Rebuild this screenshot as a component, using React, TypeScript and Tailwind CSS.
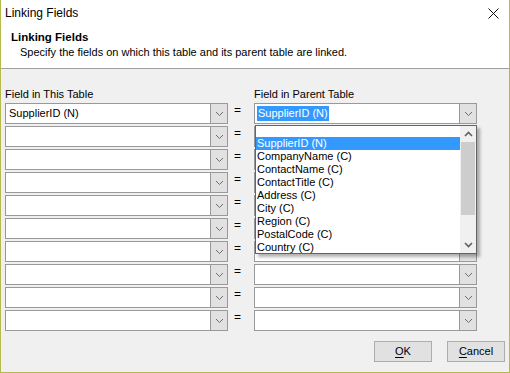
import React from 'react'

const FONT = { fontFamily: '"Liberation Sans", Arial, sans-serif' }

const PARENT_FIELDS = [
  'SupplierID (N)',
  'CompanyName (C)',
  'ContactName (C)',
  'ContactTitle (C)',
  'Address (C)',
  'City (C)',
  'Region (C)',
  'PostalCode (C)',
  'Country (C)',
]

function Chevron({ up = false, bold = false }: { up?: boolean; bold?: boolean }) {
  return (
    <svg width="9" height="6" viewBox="0 0 9 6" className="block">
      <path
        d={up ? 'M1 5 L4.5 1.5 L8 5' : 'M1 1 L4.5 4.5 L8 1'}
        fill="none"
        stroke={bold ? '#606060' : '#6d6d6d'}
        strokeWidth={bold ? 1.6 : 1}
      />
    </svg>
  )
}

function Combo({ value, selected }: { value?: string; selected?: boolean }) {
  return (
    <div className="flex h-[21px] w-[223px] border border-[#999999] bg-white">
      <div className="flex flex-1 items-center pl-[2px] text-[11px] leading-[15px]">
        {value && (
          <span className={selected ? 'bg-[#3399ff] px-[1px] text-white' : 'px-[1px] text-black'}>{value}</span>
        )}
      </div>
      <div className="flex w-[17px] items-center justify-center border-l border-[#999999] bg-[#e1e1e1]">
        <Chevron />
      </div>
    </div>
  )
}

function DropList() {
  return (
    <div className="absolute left-[1px] top-[22px] z-10 flex h-[129px] w-[222px] overflow-hidden border border-[#646464] bg-white shadow-[3px_3px_3px_rgba(0,0,0,0.3)]">
      <div className="flex-1">
        <div className="h-[11px]" />
        {PARENT_FIELDS.map((f, i) => (
          <div
            key={f}
            className={`h-[13px] pl-[1px] text-[11px] leading-[13px] ${i === 0 ? 'bg-[#3399ff] text-white' : 'text-black'}`}
          >
            {f}
          </div>
        ))}
      </div>
      <div className="flex w-[16px] flex-col bg-[#f0f0f0]">
        <div className="flex h-[16px] items-center justify-center">
          <Chevron up bold />
        </div>
        <div className="mx-[1px] h-[73px] bg-[#cdcdcd]" />
        <div className="flex-1" />
        <div className="flex h-[16px] items-center justify-center">
          <Chevron bold />
        </div>
      </div>
    </div>
  )
}

export default function App() {
  const rows = Array.from({ length: 10 }, (_, i) => i)
  return (
    <div
      className="flex h-[373px] w-[510px] flex-col border-x border-b border-[#b6b94c] bg-[#f0f0f0] text-black"
      style={FONT}
    >
      {/* Title + header */}
      <div className="h-[69px] border-b border-[#a0a0a0] bg-white">
        <div className="flex h-[27px] items-center justify-between pl-[4px] pr-[10px]">
          <span className="text-[12px] leading-[15px]">Linking Fields</span>
          <svg width="11" height="11" viewBox="0 0 11 11">
            <path d="M0.5 0.5 L10.5 10.5 M10.5 0.5 L0.5 10.5" stroke="#111" strokeWidth="1" />
          </svg>
        </div>
        <div className="mt-[3px] pl-[10px] text-[11.5px] font-bold leading-[15px]">Linking Fields</div>
        <div className="pl-[19px] text-[11px] leading-[15px]">
          Specify the fields on which this table and its parent table are linked.
        </div>
      </div>

      {/* Field grid */}
      <div className="pl-[4px] pt-[18px]">
        <div className="flex h-[16px] text-[11px] leading-[15px]">
          <div className="w-[249px]">Field in This Table</div>
          <div>Field in Parent Table</div>
        </div>
        <div className="flex flex-col gap-[2px]">
          {rows.map(i => (
            <div key={i} className="flex h-[21px]">
              <Combo value={i === 0 ? 'SupplierID (N)' : undefined} />
              <div className="w-[26px] pl-[6px] text-[12px] leading-[15px]">=</div>
              <div className="relative">
                <Combo value={i === 0 ? 'SupplierID (N)' : undefined} selected={i === 0} />
                {i === 0 && <DropList />}
              </div>
            </div>
          ))}
        </div>
      </div>

      {/* Buttons */}
      <div className="mt-[10px] flex justify-end gap-[15px] pr-[4px]">
        <button className="h-[21px] w-[58px] border border-[#adadad] bg-[#e1e1e1] text-[11px] leading-[15px]">
          <span className="underline underline-offset-2">O</span>K
        </button>
        <button className="h-[21px] w-[58px] border border-[#adadad] bg-[#e1e1e1] text-[11px] leading-[15px]">
          <span className="underline underline-offset-2">C</span>ancel
        </button>
      </div>
    </div>
  )
}
